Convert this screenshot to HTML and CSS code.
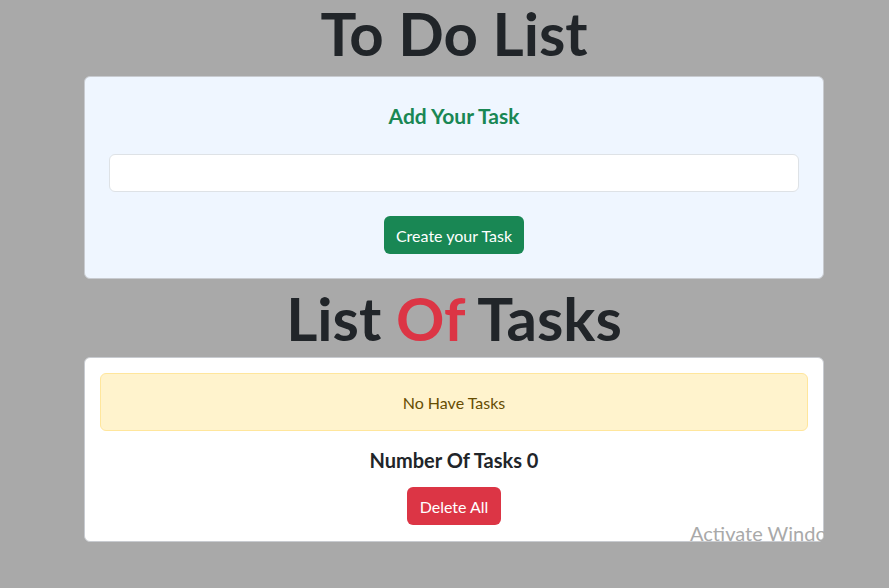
FILE: index.html
```html
<!DOCTYPE html>
<html lang="en">
<head>
<meta charset="utf-8">
<title>To Do List</title>
<link rel="stylesheet" href="styles.css">
</head>
<body>
<div class="page">
  <h1 class="title title-first">To Do List</h1>
  <section class="card card-form">
    <h2 class="form-heading">Add Your Task</h2>
    <input class="task-input" type="text">
    <div class="actions">
      <button class="btn btn-green">Create your Task</button>
    </div>
  </section>
  <h1 class="title title-list">List <span class="red">Of</span> Tasks</h1>
  <section class="card card-list">
    <div class="alert">No Have Tasks</div>
    <h5 class="count">Number Of Tasks 0</h5>
    <div class="actions">
      <button class="btn btn-red">Delete All</button>
    </div>
  </section>
</div>
<div class="watermark">Activate Windows</div>
</body>
</html>
```
FILE: styles.css
```css
html, body {
  margin: 0;
  padding: 0;
}
body {
  background: #a9a9a9;
  font-family: Lato, "Open Sans", sans-serif;
  color: #212529;
  font-size: 16px;
  min-height: 588px;
  position: relative;
  overflow: hidden;
}
.page {
  width: 740px;
  margin-left: 84px;
}
.title {
  margin: 0;
  text-align: center;
  font-size: 60px;
  font-weight: 700;
  color: #212529;
}
.title-first {
  line-height: 67px;
  margin-bottom: 9px;
}
.title-list {
  line-height: 76px;
  margin-top: 1px;
  margin-bottom: 1px;
}
.red {
  color: #dc3545;
}
.card {
  box-sizing: border-box;
  border: 1px solid #c8cbd0;
  border-radius: 6px;
}
.card-form {
  background: #eff6ff;
  padding: 24px;
  height: 203px;
}
.form-heading {
  margin: 3px 0 26px;
  text-align: center;
  color: #198754;
  font-size: 21px;
  line-height: 24px;
  font-weight: 700;
}
.task-input {
  display: block;
  box-sizing: border-box;
  width: 100%;
  height: 38px;
  border: 1px solid #dee2e6;
  border-radius: 6px;
  background: #fff;
  margin-bottom: 24px;
}
.actions {
  display: flex;
  justify-content: center;
}
.btn {
  box-sizing: border-box;
  height: 38px;
  padding: 0 12px;
  border: 0;
  border-radius: 6px;
  color: #fff;
  font-family: inherit;
  font-size: 16px;
  white-space: nowrap;
}
.btn-green {
  background: #198754;
}
.btn-red {
  background: #dc3545;
  padding: 0 13px;
}
.card-list {
  background: #fff;
  padding: 15px;
  height: 185px;
}
.alert {
  box-sizing: border-box;
  height: 58px;
  display: flex;
  align-items: center;
  justify-content: center;
  background: #fff3cd;
  border: 1px solid #ffe69c;
  border-radius: 6px;
  color: #664d03;
  font-size: 16px;
}
.count {
  margin: 17px 0 15px;
  text-align: center;
  font-size: 20px;
  line-height: 24px;
  font-weight: 700;
}
.watermark {
  position: absolute;
  left: 690px;
  top: 521px;
  font-size: 20px;
  color: #a9a9a9;
  white-space: nowrap;
}
```
